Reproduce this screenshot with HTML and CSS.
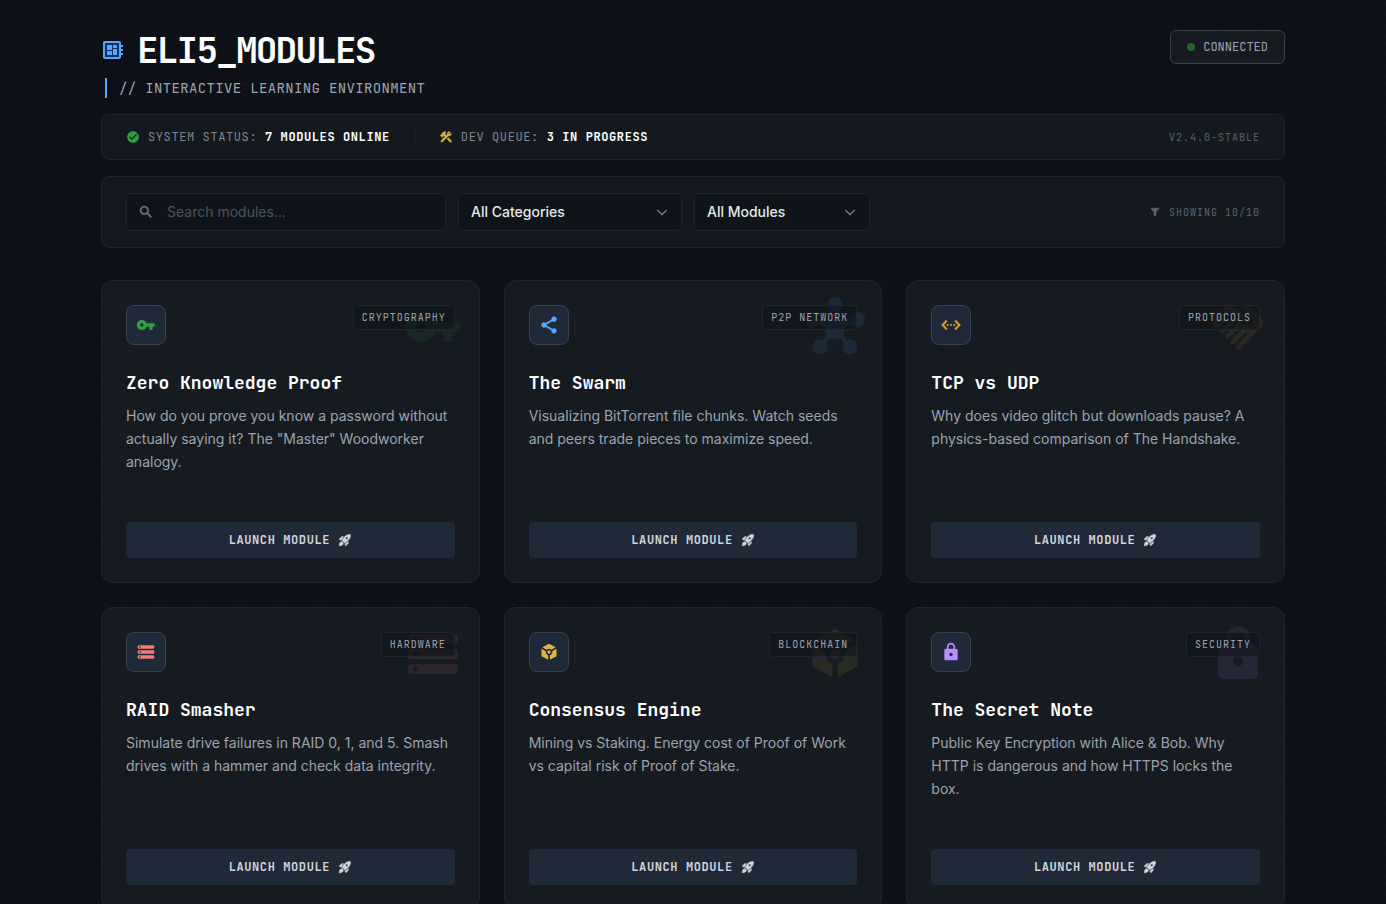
FILE: index.html
```html
<!DOCTYPE html>
<html lang="en">
<head>
    <meta charset="UTF-8">
    <meta name="viewport" content="width=device-width, initial-scale=1.0">
    <title>ELI5_MODULES</title>
    <link rel="stylesheet" href="styles.css">
</head>
<body>
    <!-- Icon set -->
    <svg class="sprite" aria-hidden="true">
        <symbol id="i-board" viewBox="0 0 24 24"><path d="M4 5h14v14H4z" fill="#12305c"/><path d="M22 9V7h-2V5c0-1.1-.9-2-2-2H4c-1.1 0-2 .9-2 2v14c0 1.1.9 2 2 2h14c1.1 0 2-.9 2-2v-2h2v-2h-2v-2h2v-2h-2V9h2zm-4 10H4V5h14v14zM6 13h5v4H6zm6-6h4v3h-4zM6 7h5v5H6zm6 4h4v6h-4z"/></symbol>
        <symbol id="i-check" viewBox="0 0 24 24"><path d="M12 2C6.48 2 2 6.48 2 12s4.48 10 10 10 10-4.48 10-10S17.520 2 12 2zm-2 15-5-5 1.410-1.410L10 14.170l7.590-7.590L19 8l-9 9z"/></symbol>
        <symbol id="i-tools" viewBox="0 0 24 24"><path stroke="currentColor" stroke-width="1" d="M13.780 15.300l6 6 2.110-2.110-6-6zM17.500 10c1.930 0 3.500-1.570 3.500-3.500 0-.58-.16-1.120-.41-1.600l-2.700 2.700-1.490-1.490 2.700-2.700C18.620 3.160 18.080 3 17.500 3 15.570 3 14 4.570 14 6.500c0 .41.08.8.21 1.160l-1.850 1.850-1.780-1.780.71-.71-1.410-1.410L12 3.490c-1.170-1.170-3.070-1.170-4.240 0L4.220 7.030l1.410 1.410H2.810l-.71.71 3.540 3.540.71-.71V9.150l1.410 1.410.71-.71 1.780 1.780-7.410 7.410 2.120 2.120L16.340 9.790c.36.13.75.21 1.160.21z"/></symbol>
        <symbol id="i-search" viewBox="0 0 24 24"><path stroke="currentColor" stroke-width=".8" d="M15.500 14h-.79l-.28-.27A6.470 6.470 0 0 0 16 9.500 6.500 6.500 0 1 0 9.500 16c1.610 0 3.090-.59 4.230-1.570l.27.28v.79l5 4.990L20.490 19l-4.990-5zm-6 0C7.010 14 5 11.990 5 9.500S7.010 5 9.500 5 14 7.010 14 9.500 11.990 14 9.500 14z"/></symbol>
        <symbol id="i-chevron" viewBox="0 0 24 24"><path d="M5 9l7 7 7-7" fill="none" stroke="currentColor" stroke-width="2.400"/></symbol>
        <symbol id="i-filter" viewBox="0 0 24 24"><path stroke="currentColor" stroke-width="1" d="M4.250 5.610C6.270 8.200 10 13 10 13v6c0 .55.45 1 1 1h2c.55 0 1-.45 1-1v-6s3.720-4.800 5.740-7.390A.998.998 0 0 0 18.950 4H5.040c-.83 0-1.300.95-.79 1.610z"/></symbol>
        <symbol id="i-rocket" viewBox="0 0 24 24"><path stroke="currentColor" stroke-width="1" d="M9.190 6.350c-2.040 2.290-3.440 5.580-3.570 5.890L2 10.690l4.050-4.050c.47-.47 1.150-.68 1.810-.55l1.330.26zM11.170 17s3.740-1.550 5.890-3.700c5.400-5.400 4.500-9.620 4.210-10.570-.95-.3-5.170-1.190-10.570 4.210C8.550 9.090 7 12.830 7 12.830L11.170 17zm6.480-2.190c-2.290 2.040-5.580 3.440-5.890 3.570L13.310 22l4.050-4.050c.47-.47.68-1.150.55-1.810l-.26-1.330zM9 18c0 .83-.34 1.580-.88 2.120C6.940 21.300 2 22 2 22s.7-4.940 1.880-6.120A2.996 2.996 0 0 1 9 18zm4-9c0-1.100.9-2 2-2s2 .9 2 2-.9 2-2 2-2-.9-2-2z"/></symbol>
        <symbol id="i-key" viewBox="0 0 24 24"><path d="M12.650 10C11.830 7.670 9.610 6 7 6c-3.310 0-6 2.690-6 6s2.690 6 6 6c2.610 0 4.830-1.670 5.650-4H16v2.500q0 1.500 1.500 1.500h1q1.500 0 1.500-1.500V14h1l2.300-2-2-2H12.650zM7 14c-1.100 0-2-.9-2-2s.9-2 2-2 2 .9 2 2-.9 2-2 2z"/></symbol>
        <symbol id="i-share" viewBox="0 0 24 24"><path stroke="currentColor" stroke-width=".6" d="M18 16.080c-.76 0-1.440.3-1.960.77L8.910 12.700c.05-.23.09-.46.09-.7s-.04-.47-.09-.7l7.050-4.110c.54.5 1.250.81 2.040.81 1.660 0 3-1.340 3-3s-1.340-3-3-3-3 1.340-3 3c0 .24.04.47.09.7L8.040 9.810C7.500 9.310 6.790 9 6 9c-1.660 0-3 1.340-3 3s1.340 3 3 3c.79 0 1.500-.31 2.040-.81l7.120 4.160c-.05.21-.08.43-.08.65 0 1.610 1.310 2.920 2.920 2.920s2.920-1.310 2.920-2.920-1.310-2.920-2.920-2.920z"/></symbol>
        <symbol id="i-hub" viewBox="0 0 24 24"><circle cx="12" cy="3" r="3"/><circle cx="3" cy="9" r="3"/><circle cx="21" cy="9" r="3"/><circle cx="6" cy="20" r="3"/><circle cx="18" cy="20" r="3"/><circle cx="12" cy="13" r="4"/><path d="M12 5v7M5 10l7 2 7-2M12 12l-5 7M12 12l5 7" fill="none" stroke="currentColor" stroke-width="1.600"/></symbol>
        <symbol id="i-ethernet" viewBox="0 0 24 24"><path d="M7 6.500L2 12l5 5.500M17 6.500l5 5.500-5 5.500" fill="none" stroke="currentColor" stroke-width="2.600"/><circle cx="8" cy="12" r="1.300"/><circle cx="12" cy="12" r="1.300"/><circle cx="16" cy="12" r="1.300"/></symbol>
        <symbol id="i-handshake" viewBox="0 0 24 24"><path d="M16.480 10.410c-.39.39-1.040.39-1.430 0l-4.470-4.460-7.050 7.040-.66-.63c-1.170-1.170-1.170-3.070 0-4.240l4.240-4.240c1.170-1.170 3.070-1.170 4.240 0L16.480 9c.39.39.39 1.020 0 1.410zm.7-2.120c.78.78.78 2.050 0 2.830-1.270 1.270-2.610.22-2.830 0l-3.760-3.760-5.570 5.570c-.39.39-.39 1.020 0 1.410.39.39 1.020.39 1.420 0l4.620-4.620.71.71-4.620 4.620c-.39.39-.39 1.020 0 1.410.39.39 1.020.39 1.420 0l4.620-4.620.71.71-4.620 4.620c-.39.39-.39 1.020 0 1.410.39.39 1.020.39 1.410 0l4.620-4.620.71.71-4.620 4.620c-.39.39-.39 1.020 0 1.410.39.39 1.020.39 1.410 0l8.320-8.340c1.170-1.170 1.170-3.070 0-4.240l-4.240-4.240c-1.150-1.150-3.010-1.170-4.180-.06l4.470 4.470z"/></symbol>
        <symbol id="i-storage" viewBox="0 0 24 24"><path fill-rule="evenodd" d="M3.500 4h17a1.500 1.500 0 0 1 1.500 1.500v1a1.500 1.500 0 0 1-1.500 1.500h-17A1.500 1.500 0 0 1 2 6.500v-1A1.500 1.500 0 0 1 3.500 4zM4 6a1 1 0 1 0 2 0 1 1 0 1 0-2 0zM3.500 10h17a1.500 1.500 0 0 1 1.500 1.500v1a1.500 1.500 0 0 1-1.500 1.500h-17A1.500 1.500 0 0 1 2 12.500v-1A1.500 1.500 0 0 1 3.500 10zM4 12a1 1 0 1 0 2 0 1 1 0 1 0-2 0zM3.500 16h17a1.500 1.500 0 0 1 1.500 1.500v1a1.500 1.500 0 0 1-1.500 1.500h-17A1.500 1.500 0 0 1 2 18.500v-1A1.500 1.500 0 0 1 3.500 16zM4 18a1 1 0 1 0 2 0 1 1 0 1 0-2 0z"/></symbol>
        <symbol id="i-token" viewBox="0 0 24 24"><path d="M19.970 6.430L12 2 4.030 6.430 9.100 9.240C9.830 8.480 10.860 8 12 8s2.170.48 2.900 1.240l5.070-2.810zM10 12c0-1.100.9-2 2-2s2 .9 2 2-.9 2-2 2-2-.9-2-2zM11 21.440L3 17V8.140l5.130 2.850c-.09.32-.13.66-.13 1.010 0 1.860 1.270 3.430 3 3.870v5.570zM13 21.440v-5.570c1.730-.44 3-2.010 3-3.870 0-.35-.04-.69-.13-1.010L21 8.140V17l-8 4.440z"/></symbol>
        <symbol id="i-lock" viewBox="0 0 24 24"><path d="M18 8h-1V6c0-2.760-2.240-5-5-5S7 3.240 7 6v2H6c-1.100 0-2 .9-2 2v10c0 1.100.9 2 2 2h12c1.100 0 2-.9 2-2V10c0-1.100-.9-2-2-2zm-6 9c-1.100 0-2-.9-2-2s.9-2 2-2 2 .9 2 2-.9 2-2 2zM9 8V6c0-1.660 1.340-3 3-3s3 1.340 3 3v2H9z"/></symbol>
    </svg>

    <div class="container">
        <header class="header">
            <div>
                <div class="brand">
                    <svg class="brand-icon"><use href="#i-board"/></svg>
                    <h1>ELI5_MODULES</h1>
                </div>
                <p class="subtitle">// INTERACTIVE LEARNING ENVIRONMENT</p>
            </div>
            <div class="connection"><span class="dot"></span>CONNECTED</div>
        </header>

        <section class="panel status-bar">
            <div class="status-item green">
                <svg class="icon-sm"><use href="#i-check"/></svg>
                <span>SYSTEM STATUS: <strong>7 MODULES ONLINE</strong></span>
            </div>
            <div class="separator"></div>
            <div class="status-item yellow">
                <svg class="icon-sm"><use href="#i-tools"/></svg>
                <span>DEV QUEUE: <strong>3 IN PROGRESS</strong></span>
            </div>
            <span class="meta">V2.4.0-STABLE</span>
        </section>

        <section class="panel filter-bar">
            <div class="search">
                <svg class="search-icon"><use href="#i-search"/></svg>
                <input type="text" id="search" placeholder="Search modules..." aria-label="Search modules">
            </div>
            <div class="select category">
                <select id="category" aria-label="Category">
                    <option>All Categories</option>
                </select>
                <svg class="select-icon"><use href="#i-chevron"/></svg>
            </div>
            <div class="select status">
                <select id="status" aria-label="Module status">
                    <option>All Modules</option>
                </select>
                <svg class="select-icon"><use href="#i-chevron"/></svg>
            </div>
            <span class="meta"><svg class="icon-xs"><use href="#i-filter"/></svg>SHOWING 10/10</span>
        </section>

        <main class="grid">
            <article class="card green">
                <svg class="watermark"><use href="#i-key"/></svg>
                <div class="card-top">
                    <div class="card-icon"><svg><use href="#i-key"/></svg></div>
                    <span class="tag">CRYPTOGRAPHY</span>
                </div>
                <h2>Zero Knowledge Proof</h2>
                <p>How do you prove you know a password without actually saying it? The "Master" Woodworker analogy.</p>
                <div class="card-footer">
                    <button type="button">LAUNCH MODULE <svg class="icon-sm"><use href="#i-rocket"/></svg></button>
                </div>
            </article>

            <article class="card blue">
                <svg class="watermark"><use href="#i-hub"/></svg>
                <div class="card-top">
                    <div class="card-icon"><svg><use href="#i-share"/></svg></div>
                    <span class="tag">P2P NETWORK</span>
                </div>
                <h2>The Swarm</h2>
                <p>Visualizing BitTorrent file chunks. Watch seeds and peers trade pieces to maximize speed.</p>
                <div class="card-footer">
                    <button type="button">LAUNCH MODULE <svg class="icon-sm"><use href="#i-rocket"/></svg></button>
                </div>
            </article>

            <article class="card orange">
                <svg class="watermark"><use href="#i-handshake"/></svg>
                <div class="card-top">
                    <div class="card-icon"><svg><use href="#i-ethernet"/></svg></div>
                    <span class="tag">PROTOCOLS</span>
                </div>
                <h2>TCP vs UDP</h2>
                <p>Why does video glitch but downloads pause? A physics-based comparison of The Handshake.</p>
                <div class="card-footer">
                    <button type="button">LAUNCH MODULE <svg class="icon-sm"><use href="#i-rocket"/></svg></button>
                </div>
            </article>

            <article class="card red">
                <svg class="watermark"><use href="#i-storage"/></svg>
                <div class="card-top">
                    <div class="card-icon"><svg><use href="#i-storage"/></svg></div>
                    <span class="tag">HARDWARE</span>
                </div>
                <h2>RAID Smasher</h2>
                <p>Simulate drive failures in RAID 0, 1, and 5. Smash drives with a hammer and check data integrity.</p>
                <div class="card-footer">
                    <button type="button">LAUNCH MODULE <svg class="icon-sm"><use href="#i-rocket"/></svg></button>
                </div>
            </article>

            <article class="card yellow">
                <svg class="watermark"><use href="#i-token"/></svg>
                <div class="card-top">
                    <div class="card-icon"><svg><use href="#i-token"/></svg></div>
                    <span class="tag">BLOCKCHAIN</span>
                </div>
                <h2>Consensus Engine</h2>
                <p>Mining vs Staking. Energy cost of Proof of Work vs capital risk of Proof of Stake.</p>
                <div class="card-footer">
                    <button type="button">LAUNCH MODULE <svg class="icon-sm"><use href="#i-rocket"/></svg></button>
                </div>
            </article>

            <article class="card purple">
                <svg class="watermark"><use href="#i-lock"/></svg>
                <div class="card-top">
                    <div class="card-icon"><svg><use href="#i-lock"/></svg></div>
                    <span class="tag">SECURITY</span>
                </div>
                <h2>The Secret Note</h2>
                <p>Public Key Encryption with Alice &amp; Bob. Why HTTP is dangerous and how HTTPS locks the box.</p>
                <div class="card-footer">
                    <button type="button">LAUNCH MODULE <svg class="icon-sm"><use href="#i-rocket"/></svg></button>
                </div>
            </article>
        </main>
    </div>
</body>
</html>
```
FILE: styles.css
```css
:root {
    --bg-color: #0d1117;
    --panel-bg: #14191f;
    --card-bg: #161b22;
    --border-color: #1f262f;
    --raised-bg: #1f2937;
    --text-color: #9ca3af;
    --muted-color: #6b7280;
    --mono: "JetBrains Mono", "DejaVu Sans Mono", monospace;
    --sans: Inter, "Liberation Sans", sans-serif;
}

* {
    box-sizing: border-box;
}

body {
    margin: 0;
    background-color: var(--bg-color);
    background-image: radial-gradient(rgba(255, 255, 255, 0.016) 1px, transparent 2px);
    background-size: 10px 10px;
    color: var(--text-color);
    font-family: var(--sans);
    font-size: 14px;
}

h1, h2, p {
    margin: 0;
}

svg {
    display: block;
    flex-shrink: 0;
    fill: currentColor;
}

.sprite {
    position: absolute;
    width: 0;
    height: 0;
}

.icon-sm {
    width: 14px;
    height: 14px;
}

.icon-xs {
    width: 12px;
    height: 12px;
}

.container {
    max-width: 1280px;
    margin: 0 auto;
    padding: 30px 48px;
}

/* Header */
.header {
    display: flex;
    justify-content: space-between;
    align-items: flex-start;
    margin-bottom: 16px;
}

.brand {
    display: flex;
    align-items: center;
    gap: 12px;
}

.brand-icon {
    width: 24px;
    height: 24px;
    color: #58a6ff;
}

h1 {
    color: #fff;
    font-family: var(--mono);
    font-size: 36px;
    line-height: 40px;
    letter-spacing: -0.05em;
}

.subtitle {
    margin: 8px 0 0 4px;
    padding-left: 12px;
    border-left: 2px solid #58a6ff;
    font-family: var(--mono);
    line-height: 20px;
    letter-spacing: 0.025em;
}

.connection {
    display: flex;
    align-items: center;
    gap: 8px;
    padding: 8px 16px;
    border: 1px solid #374151;
    border-radius: 6px;
    background: var(--card-bg);
    font-family: var(--mono);
    font-size: 12px;
    line-height: 16px;
}

.dot {
    width: 8px;
    height: 8px;
    border-radius: 50%;
    background: #265f34;
}

/* Status and filter panels */
.panel {
    display: flex;
    align-items: center;
    margin-bottom: 16px;
    border: 1px solid var(--border-color);
    border-radius: 8px;
    background: var(--panel-bg);
}

.status-bar {
    gap: 24px;
    padding: 14px 24px;
    font-family: var(--mono);
    font-size: 12px;
    line-height: 16px;
    letter-spacing: 0.05em;
}

.status-item {
    display: flex;
    align-items: center;
    gap: 8px;
}

.status-item span {
    color: #7f8590;
}

.status-item strong {
    color: #fff;
}

.separator {
    width: 1px;
    height: 16px;
    background: var(--border-color);
}

.meta {
    display: flex;
    align-items: center;
    gap: 8px;
    margin-left: auto;
    color: #5b616c;
    font-family: var(--mono);
    font-size: 10px;
    line-height: 15px;
    letter-spacing: 0.1em;
}

.filter-bar {
    gap: 12px;
    padding: 16px 24px;
    margin-bottom: 32px;
}

.search,
.select {
    position: relative;
}

.search {
    width: 320px;
}

.category {
    width: 224px;
}

.status {
    width: 176px;
}

.search input,
.select select {
    display: block;
    width: 100%;
    height: 38px;
    border: 1px solid #1e2631;
    border-radius: 6px;
    background: #0f141a;
    color: #e5e7eb;
    font-family: var(--sans);
    font-size: 14px;
}

.search input {
    padding: 8px 12px 10px 40px;
}

.search input::placeholder {
    color: #4b5563;
}

.select select {
    appearance: none;
    padding: 8px 36px 10px 12px;
    font-weight: 500;
}

.search input:focus,
.select select:focus {
    border-color: #58a6ff;
    outline: none;
}

.search-icon,
.select-icon {
    position: absolute;
    top: 11px;
    width: 16px;
    height: 16px;
    color: var(--muted-color);
    pointer-events: none;
}

.search-icon {
    left: 12px;
}

.select-icon {
    right: 12px;
}

/* Module cards */
.grid {
    display: grid;
    grid-template-columns: repeat(3, 1fr);
    gap: 24px;
}

.card {
    position: relative;
    display: flex;
    flex-direction: column;
    min-height: 303px;
    padding: 24px;
    border: 1px solid var(--border-color);
    border-radius: 12px;
    background: var(--card-bg);
}

.watermark {
    position: absolute;
    top: 16px;
    right: 16px;
    width: 60px;
    height: 60px;
    opacity: 0.1;
}

.card-top {
    position: relative;
    display: flex;
    justify-content: space-between;
    align-items: flex-start;
    margin-bottom: 24px;
}

.card-icon {
    display: flex;
    align-items: center;
    justify-content: center;
    width: 40px;
    height: 40px;
    border: 1px solid #374151;
    border-radius: 8px;
    background: var(--raised-bg);
}

.card-icon svg {
    width: 20px;
    height: 20px;
}

.tag {
    padding: 4px 8px;
    border: 1px solid #1e2631;
    border-radius: 4px;
    background: rgba(13, 17, 23, 0.5);
    color: var(--text-color);
    font-family: var(--mono);
    font-size: 10px;
    line-height: 15px;
    letter-spacing: 0.1em;
}

.card h2 {
    margin-bottom: 7px;
    color: #fff;
    font-family: var(--mono);
    font-size: 18px;
    line-height: 28px;
}

.card p {
    color: var(--text-color);
    line-height: 23px;
}

.card-footer {
    margin-top: auto;
    padding-top: 16px;
    border-top: 1px solid #191f27;
}

button {
    display: flex;
    align-items: center;
    justify-content: center;
    gap: 8px;
    width: 100%;
    padding: 10px;
    border: none;
    border-radius: 4px;
    background: var(--raised-bg);
    color: #d1d5db;
    font-family: var(--mono);
    font-size: 12px;
    font-weight: bold;
    line-height: 16px;
    letter-spacing: 0.05em;
    cursor: pointer;
}

button:hover {
    background: #2b3749;
}

/* Accents */
.green {
    color: #2ea043;
}

.blue {
    color: #58a6ff;
}

.orange {
    color: #d29922;
}

.red {
    color: #f47c7c;
}

.yellow {
    color: #e3b341;
}

.purple {
    color: #bc8cff;
}

@media (max-width: 1000px) {
    .grid {
        grid-template-columns: repeat(2, 1fr);
    }

    .status-bar,
    .filter-bar {
        flex-wrap: wrap;
    }
}

@media (max-width: 640px) {
    .container {
        padding: 24px 16px;
    }

    .grid {
        grid-template-columns: 1fr;
    }
}
```
